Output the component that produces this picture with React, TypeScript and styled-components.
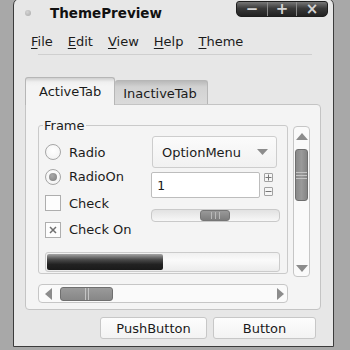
import React from "react";
import styled, { createGlobalStyle } from "styled-components";

const Global = createGlobalStyle`
  html, body { margin: 0; padding: 0; background: #a8a8a8; }
  body { font-family: "DejaVu Sans", "Noto Sans", sans-serif; font-size: 13px; color: #1b1b1b; }
  * { box-sizing: border-box; }
`;

const Page = styled.div`
  width: 350px;
  height: 350px;
  overflow: hidden;
  padding-left: 13px;
  background: #a8a8a8;
`;

const Window = styled.div`
  width: 321px;
  height: 349px;
  margin-top: -2px;
  border: 1px solid #3c3c3c;
  border-radius: 7px 7px 0 0;
  background: #e7e7e7;
  display: flex;
  flex-direction: column;
`;

const TitleBar = styled.div`
  height: 27px;
  flex: none;
  display: flex;
  align-items: center;
  padding-left: 11px;
`;

const Dot = styled.span`
  width: 6px;
  height: 6px;
  border-radius: 50%;
  background: radial-gradient(circle at 40% 35%, #d4d4d4, #a9a9a9);
`;

const Title = styled.span`
  margin-left: 19px;
  font-weight: bold;
  font-size: 13.5px;
  color: #111;
`;

const WinButtons = styled.div`
  margin-left: auto;
  margin-right: 5px;
  align-self: flex-start;
  margin-top: 2px;
  height: 16px;
  display: flex;
  border: 1px solid #1e1e1e;
  border-radius: 3px 3px 5px 5px;
  background: linear-gradient(#767676 0%, #3a3a3a 45%, #222 100%);
  overflow: hidden;
`;

const WinButton = styled.span<{ $w: number; $last?: boolean }>`
  width: ${(p) => p.$w}px;
  height: 100%;
  display: flex;
  align-items: center;
  justify-content: center;
  border-right: ${(p) => (p.$last ? "none" : "1px solid #8a8a8a")};
  color: #d4d4d4;
  font-weight: bold;
  font-size: 15px;
  line-height: 14px;
`;

const MenuBar = styled.div`
  flex: none;
  height: 28px;
  padding: 4px 0 0 17px;
  display: flex;
  align-items: center;
  gap: 15px;
`;

const MenuItem = styled.span`
  font-size: 13px;
  line-height: 24px;
`;

const Mnemonic = styled.span`
  text-decoration-line: underline;
  text-decoration-color: #1b1b1b;
  text-decoration-thickness: 1px;
  text-underline-offset: 2px;
`;

const Separator = styled.div`
  flex: none;
  height: 1px;
  margin: 0 21px 0 24px;
  background: #cfcfcf;
`;

const Notebook = styled.div`
  flex: none;
  margin: 22px 12px 0 11px;
  display: flex;
  flex-direction: column;
`;

const TabRow = styled.div`
  height: 27px;
  display: flex;
  align-items: flex-end;
`;

const Tab = styled.div<{ $active?: boolean }>`
  position: relative;
  z-index: ${(p) => (p.$active ? 1 : 0)};
  height: ${(p) => (p.$active ? 28 : 24)}px;
  margin-bottom: ${(p) => (p.$active ? -1 : 0)}px;
  padding: ${(p) => (p.$active ? "0 13px" : "1px 10px 0 8px")};
  display: flex;
  align-items: center;
  border: 1px solid #b6b6b6;
  border-bottom: none;
  border-left: ${(p) => (p.$active ? "1px solid #b6b6b6" : "none")};
  border-radius: 3px 3px 0 0;
  background: ${(p) =>
    p.$active
      ? "linear-gradient(#cfcfcf 0px, #efefef 4px, #f4f4f4 8px)"
      : "linear-gradient(#b9b9b9 0px, #d2d2d2 6px, #dadada 100%)"};
  font-size: 13px;
`;

const Panel = styled.div`
  height: 206px;
  border: 1px solid #c4c4c4;
  border-radius: 0 4px 4px 4px;
  background: #f4f4f4;
  padding: 13px 9px 9px 12px;
  display: grid;
  grid-template-columns: 250px 17px;
  column-gap: 5px;
  row-gap: 7px;
  align-items: start;
`;

const Frame = styled.fieldset`
  margin: 0;
  min-width: 0;
  border: 1px solid #cacaca;
  border-radius: 3px;
  padding: 0 7px 1px 6px;
`;

const Legend = styled.legend`
  padding: 0 1px;
  margin-left: -2px;
  line-height: 15px;
  font-size: 13px;
`;

const FrameTop = styled.div`
  display: grid;
  grid-template-columns: 106px 129px;
  align-items: start;
`;

const LeftCol = styled.div`
  padding-top: 7px;
  display: flex;
  flex-direction: column;
`;

const OptRow = styled.div<{ $h: number }>`
  height: ${(p) => p.$h}px;
  display: flex;
  align-items: center;
  gap: 8px;
`;

const RadioCircle = styled.span<{ $on?: boolean }>`
  width: 16px;
  height: 16px;
  flex: none;
  border-radius: 50%;
  border: 1px solid #a6a6a6;
  background: radial-gradient(circle at 50% 40%, #ffffff, #f0f0f0);
  display: flex;
  align-items: center;
  justify-content: center;
  &::after {
    content: "";
    display: ${(p) => (p.$on ? "block" : "none")};
    width: 8px;
    height: 8px;
    border-radius: 50%;
    background: radial-gradient(circle at 40% 35%, #a8a8a8, #7e7e7e);
  }
`;

const CheckBox = styled.span`
  width: 16px;
  height: 16px;
  flex: none;
  border: 1px solid #aeaeae;
  background: #fdfdfd;
  display: flex;
  align-items: center;
  justify-content: center;
`;

const RightCol = styled.div`
  padding-top: 3px;
  display: flex;
  flex-direction: column;
`;

const OptionMenu = styled.div`
  margin-left: 1px;
  width: 125px;
  height: 32px;
  border: 1px solid #cdcdcd;
  border-radius: 3px;
  background: linear-gradient(#fbfbfb, #f1f1f1);
  display: flex;
  align-items: center;
  justify-content: space-between;
  padding: 0 8px 0 9px;
  font-size: 13px;
`;

const SpinRow = styled.div`
  margin-top: 4px;
  height: 26px;
  display: flex;
  gap: 4px;
`;

const Entry = styled.div`
  width: 109px;
  height: 26px;
  border: 1px solid #bdbdbd;
  border-radius: 2px;
  background: #fff;
  font-family: "DejaVu Sans Mono", monospace;
  font-size: 13px;
  display: flex;
  align-items: center;
  padding-left: 5px;
`;

const SpinButtons = styled.div`
  padding-top: 1px;
  display: flex;
  flex-direction: column;
  gap: 5px;
`;

const SpinButton = styled.span`
  width: 9px;
  height: 9px;
  border: 1px solid #a2a2a2;
  border-radius: 1px;
  background: #f6f6f6;
  display: flex;
  align-items: center;
  justify-content: center;
`;

const Slider = styled.div`
  margin-top: 11px;
  height: 13px;
  border: 1px solid #c9c9c9;
  border-radius: 4px;
  background: linear-gradient(#e2e2e2, #f7f7f7);
  display: flex;
  align-items: center;
  padding-left: 48px;
`;

const SliderThumb = styled.span`
  width: 30px;
  height: 11px;
  border: 1px solid #767676;
  border-radius: 3px;
  background: linear-gradient(#999, #7d7d7d);
  display: flex;
  align-items: center;
  justify-content: center;
  gap: 3px;
  span {
    width: 1px;
    height: 7px;
    background: #b9b9b9;
  }
`;

const Progress = styled.div`
  margin-top: 10px;
  height: 20px;
  border: 1px solid #cbcbcb;
  border-radius: 3px;
  background: linear-gradient(#f0f0f0, #fafafa 40%, #ececec);
  padding: 1px;
  display: flex;
`;

const ProgressFill = styled.div`
  height: 100%;
  border-radius: 2px;
  background: linear-gradient(#a5a5a5 0%, #4a4a4a 35%, #222 65%, #1a1a1a 100%);
`;

const VScroll = styled.div`
  margin-top: 8px;
  height: 151px;
  border: 1px solid #c6c6c6;
  border-radius: 4px;
  background: #fafafa;
  display: flex;
  flex-direction: column;
  align-items: center;
  padding: 6px 0 4px;
`;

const VThumb = styled.div`
  margin-top: 9px;
  width: 13px;
  height: 52px;
  border: 1px solid #6f6f6f;
  border-radius: 3px;
  background: linear-gradient(90deg, #8a8a8a, #9a9a9a 50%, #858585);
  display: flex;
  flex-direction: column;
  justify-content: center;
  align-items: stretch;
  gap: 2px;
  span {
    height: 1px;
    background: #c4c4c4;
  }
`;

const Spacer = styled.div`
  flex: 1;
`;

const HScroll = styled.div`
  height: 19px;
  border: 1px solid #c6c6c6;
  border-radius: 4px;
  background: #fafafa;
  display: flex;
  align-items: center;
  padding: 0 3px 0 6px;
`;

const HThumb = styled.div`
  margin-left: 8px;
  width: 53px;
  height: 14px;
  border: 1px solid #6f6f6f;
  border-radius: 3px;
  background: linear-gradient(#9a9a9a, #878787);
  display: flex;
  align-items: stretch;
  justify-content: center;
  gap: 2px;
  span {
    width: 1px;
    background: #c4c4c4;
  }
`;

const ButtonRow = styled.div`
  flex: none;
  margin-top: 7px;
  padding-right: 17px;
  display: flex;
  justify-content: flex-end;
  gap: 6px;
`;

const PushButton = styled.div<{ $w: number }>`
  width: ${(p) => p.$w}px;
  height: 22px;
  border: 1px solid #c7c7c7;
  border-radius: 3px;
  background: linear-gradient(#fdfdfd, #f3f3f3);
  display: flex;
  align-items: center;
  justify-content: center;
  font-size: 13px;
`;

const Arrow = ({ dir }: { dir: "up" | "down" | "left" | "right" }) => {
  const pts = {
    up: "0,7 6,0 12,7",
    down: "0,0 12,0 6,7",
    left: "7,0 7,12 0,6",
    right: "0,0 7,6 0,12",
  }[dir];
  const vertical = dir === "up" || dir === "down";
  return (
    <svg width={vertical ? 12 : 7} height={vertical ? 7 : 12} style={{ display: "block", flex: "none" }}>
      <polygon points={pts} fill="#8c8c8c" />
    </svg>
  );
};

const Cross = () => (
  <svg width="8" height="8" style={{ display: "block" }}>
    <path d="M1 1 L7 7 M7 1 L1 7" stroke="#6f6f6f" strokeWidth="1.5" />
  </svg>
);

const Plus = () => (
  <svg width="7" height="7" style={{ display: "block" }}>
    <path d="M3.5 0.5 V6.5 M0.5 3.5 H6.5" stroke="#777" strokeWidth="1" />
  </svg>
);

const Minus = () => (
  <svg width="7" height="7" style={{ display: "block" }}>
    <path d="M0.5 3.5 H6.5" stroke="#777" strokeWidth="1" />
  </svg>
);

const MenuArrow = () => (
  <svg width="11" height="6" style={{ display: "block" }}>
    <polygon points="0,0 11,0 5.5,6" fill="#8c8c8c" />
  </svg>
);

const menus: [string, string][] = [
  ["F", "ile"],
  ["E", "dit"],
  ["V", "iew"],
  ["H", "elp"],
  ["T", "heme"],
];

export default function App() {
  return (
    <>
      <Global />
      <Page>
        <Window>
          <TitleBar>
            <Dot />
            <Title>ThemePreview</Title>
            <WinButtons>
              <WinButton $w={31}>−</WinButton>
              <WinButton $w={29}>+</WinButton>
              <WinButton $w={30} $last>
                ×
              </WinButton>
            </WinButtons>
          </TitleBar>
          <MenuBar>
            {menus.map(([a, b]) => (
              <MenuItem key={a}>
                <Mnemonic>{a}</Mnemonic>
                {b}
              </MenuItem>
            ))}
          </MenuBar>
          <Separator />
          <Notebook>
            <TabRow>
              <Tab $active>ActiveTab</Tab>
              <Tab>InactiveTab</Tab>
            </TabRow>
            <Panel>
              <Frame>
                <Legend>Frame</Legend>
                <FrameTop>
                  <LeftCol>
                    <OptRow $h={24}>
                      <RadioCircle />
                      Radio
                    </OptRow>
                    <OptRow $h={25}>
                      <RadioCircle $on />
                      RadioOn
                    </OptRow>
                    <OptRow $h={28}>
                      <CheckBox />
                      Check
                    </OptRow>
                    <OptRow $h={25}>
                      <CheckBox>
                        <Cross />
                      </CheckBox>
                      Check On
                    </OptRow>
                  </LeftCol>
                  <RightCol>
                    <OptionMenu>
                      OptionMenu
                      <MenuArrow />
                    </OptionMenu>
                    <SpinRow>
                      <Entry>1</Entry>
                      <SpinButtons>
                        <SpinButton>
                          <Plus />
                        </SpinButton>
                        <SpinButton>
                          <Minus />
                        </SpinButton>
                      </SpinButtons>
                    </SpinRow>
                    <Slider>
                      <SliderThumb>
                        <span />
                        <span />
                        <span />
                      </SliderThumb>
                    </Slider>
                  </RightCol>
                </FrameTop>
                <Progress>
                  <ProgressFill style={{ width: "50%" }} />
                </Progress>
              </Frame>
              <VScroll>
                <Arrow dir="up" />
                <VThumb>
                  <span />
                  <span />
                  <span />
                </VThumb>
                <Spacer />
                <Arrow dir="down" />
              </VScroll>
              <HScroll>
                <Arrow dir="left" />
                <HThumb>
                  <span />
                  <span />
                </HThumb>
                <Spacer />
                <Arrow dir="right" />
              </HScroll>
            </Panel>
          </Notebook>
          <ButtonRow>
            <PushButton $w={107}>PushButton</PushButton>
            <PushButton $w={103}>Button</PushButton>
          </ButtonRow>
        </Window>
      </Page>
    </>
  );
}
